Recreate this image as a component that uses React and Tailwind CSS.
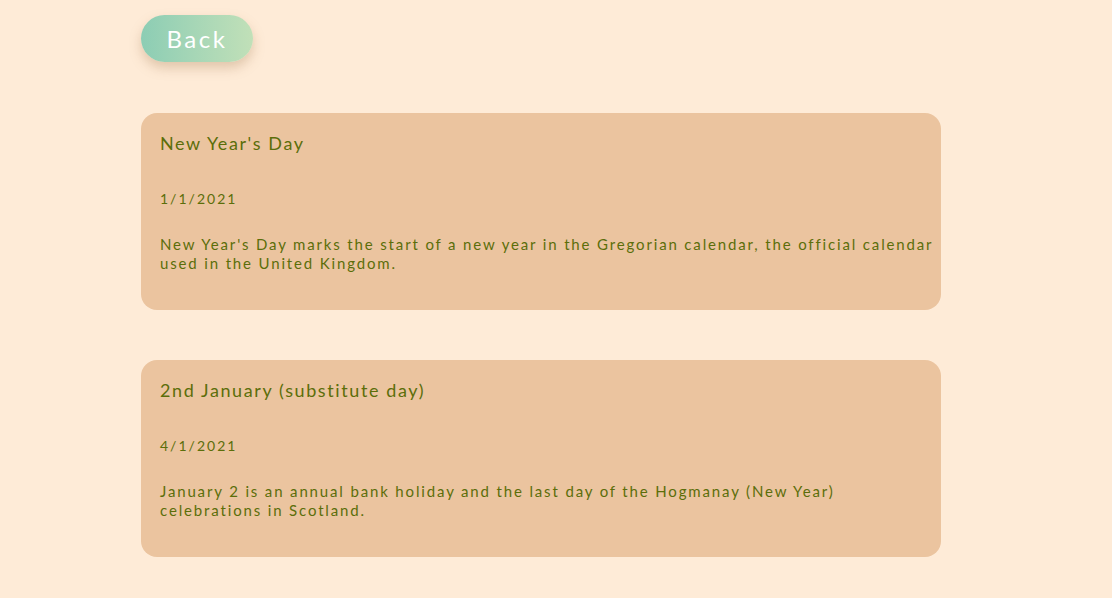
const holidays = [
  {
    title: "New Year's Day",
    date: '1/1/2021',
    notes: "New Year's Day marks the start of a new year in the Gregorian calendar, the official calendar used in the United Kingdom.",
  },
  {
    title: '2nd January (substitute day)',
    date: '4/1/2021',
    notes: 'January 2 is an annual bank holiday and the last day of the Hogmanay (New Year) celebrations in Scotland.',
  },
];

const HolidayCard = ({ title, date, notes }) => (
  <div className="w-[800px] h-[197px] rounded-2xl bg-[#ebc49f] pl-[19px] pr-[5px] pt-[17px] text-[#5b6e0a]">
    <h2 className="text-[18px] leading-[26px] tracking-[1.6px]">{title}</h2>
    <p className="mt-[33px] text-[14px] leading-[20px] tracking-[2px]">{date}</p>
    <p className="mt-[26px] text-[15px] leading-[19px] tracking-[1.85px]">{notes}</p>
  </div>
);

export default function App() {
  return (
    <div
      className="min-h-[598px] bg-[#feebd7] pl-[141px] pt-[15px]"
      style={{ fontFamily: 'Lato, "Open Sans", sans-serif' }}
    >
      <button className="h-[47px] w-[112px] rounded-full bg-gradient-to-r from-[#8ccdb4] to-[#c1e0b8] text-[24px] tracking-[2.5px] text-white shadow-[0_6px_12px_rgba(170,130,90,0.35)]">
        Back
      </button>
      <div className="mt-[51px] flex flex-col gap-[50px]">
        {holidays.map((h) => (
          <HolidayCard key={h.date} {...h} />
        ))}
      </div>
    </div>
  );
}
